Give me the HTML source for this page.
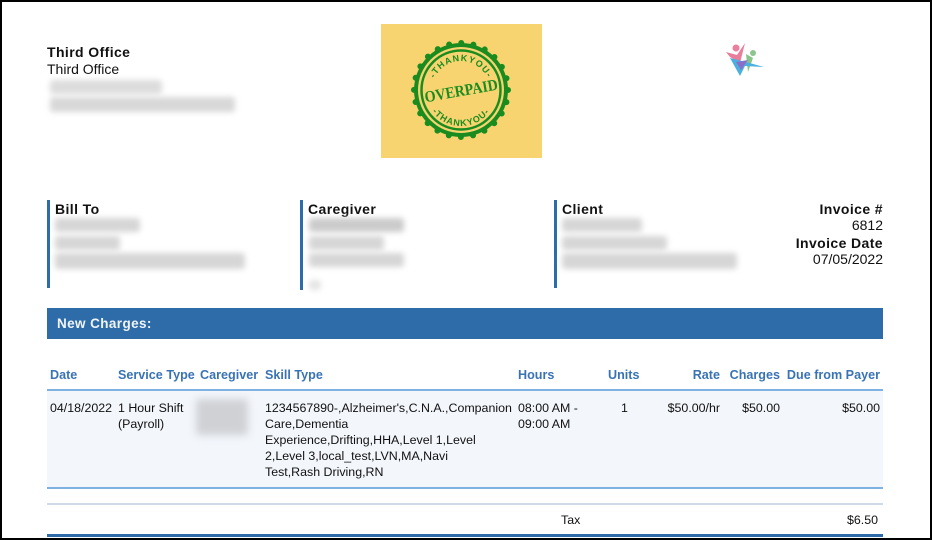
<!DOCTYPE html>
<html><head><meta charset="utf-8"><style>
*{margin:0;padding:0;box-sizing:border-box}
body{width:932px;height:540px;overflow:hidden;background:#fff;font-family:"Liberation Sans",Arial,sans-serif;font-size:12.4px;color:#111;position:relative}
.frame{position:absolute;left:0;top:0;width:932px;height:540px;border:2px solid #000}
.a{position:absolute;white-space:nowrap}
.b{font-weight:bold;letter-spacing:0.4px}
.blur{position:absolute;background:#d6d6d6;filter:blur(3px);border-radius:3px}
.bar{position:absolute;width:3px;background:#2d6ca9}
.h{position:absolute;top:368px;color:#3a73b4;font-weight:bold;font-size:12.6px}
.c{position:absolute;top:400px;line-height:16px;font-size:12.4px}
.t{font-size:14px}
</style></head><body>
<div class="frame"></div>
<div class="a b t" style="left:47px;top:44px">Third Office</div>
<div class="a t" style="left:47px;top:61px">Third Office</div>
<div class="blur" style="left:50px;top:80px;width:112px;height:14px;background:#dcdcdc"></div>
<div class="blur" style="left:50px;top:97px;width:185px;height:15px;background:#d8d8d8"></div>

<div style="position:absolute;left:381px;top:24px;width:161px;height:134px;background:#f7d470"></div>
<svg style="position:absolute;left:381px;top:24px" width="161" height="134" viewBox="0 0 161 134">
<defs>
<path id="top" d="M51 66 A29 29 0 0 1 109 66"/>
<path id="bot" d="M44 66 A36 36 0 0 0 116 66"/>
</defs>
<circle cx="80" cy="66" r="47" fill="#1a8c1f"/>
<circle cx="80" cy="66" r="47" fill="none" stroke="#1a8c1f" stroke-width="6" stroke-linecap="round" stroke-dasharray="0 12.3"/>
<circle cx="80" cy="66" r="43" fill="#f7d470"/>
<circle cx="80" cy="66" r="39.5" fill="none" stroke="#1a8c1f" stroke-width="2.5"/>
<text fill="#1a8c1f" font-size="9" font-weight="bold" font-family="Liberation Sans" letter-spacing="1"><textPath href="#top" startOffset="50%" text-anchor="middle">-THANKYOU-</textPath></text>
<text fill="#1a8c1f" font-size="9" font-weight="bold" font-family="Liberation Sans" letter-spacing="1"><textPath href="#bot" startOffset="50%" text-anchor="middle">-THANKYOU-</textPath></text>
<text x="80" y="72" text-anchor="middle" fill="#1a8c1f" font-size="16" font-weight="bold" font-family="Liberation Serif" textLength="74" lengthAdjust="spacingAndGlyphs" transform="rotate(-10 80 66)">OVERPAID</text>
</svg>

<svg style="position:absolute;left:724px;top:40px" width="42" height="38" viewBox="0 0 42 38">
<circle cx="12" cy="8" r="3.5" fill="#ec7fa0"/>
<path d="M2 12 L13 15 L21 3 L16 23 L6 17Z" fill="#ea7c9c"/>
<circle cx="29" cy="13" r="3" fill="#8cc68e"/>
<path d="M22 14 L29 18 L24 32Z" fill="#86c488"/>
<path d="M6 18 L16 36 L21 26 L40 27 L22 22Z" fill="#4bb0e0"/>
<path d="M12 22 L17 30 L24 20Z" fill="#8a6fc8"/>
</svg>

<div class="bar" style="left:47px;top:200px;height:88px"></div>
<div class="bar" style="left:300px;top:200px;height:90px"></div>
<div class="bar" style="left:554px;top:200px;height:88px"></div>
<div class="a b t" style="left:55px;top:201px">Bill To</div>
<div class="a b t" style="left:308px;top:201px">Caregiver</div>
<div class="a b t" style="left:562px;top:201px">Client</div>
<div class="blur" style="left:55px;top:218px;width:85px;height:14px"></div>
<div class="blur" style="left:55px;top:236px;width:65px;height:14px"></div>
<div class="blur" style="left:55px;top:253px;width:190px;height:16px"></div>
<div class="blur" style="left:309px;top:218px;width:95px;height:14px;background:#cbcbcb"></div>
<div class="blur" style="left:309px;top:236px;width:75px;height:14px"></div>
<div class="blur" style="left:309px;top:253px;width:95px;height:14px"></div>
<div class="blur" style="left:309px;top:280px;width:12px;height:10px;background:#e4e4e4"></div>
<div class="blur" style="left:562px;top:218px;width:80px;height:14px"></div>
<div class="blur" style="left:562px;top:236px;width:105px;height:14px"></div>
<div class="blur" style="left:562px;top:253px;width:175px;height:16px"></div>
<div class="a b t" style="right:49px;top:201px">Invoice #</div>
<div class="a t" style="right:49px;top:217px">6812</div>
<div class="a b t" style="right:49px;top:235px">Invoice Date</div>
<div class="a t" style="right:49px;top:251px">07/05/2022</div>

<div style="position:absolute;left:47px;top:308px;width:836px;height:31px;background:#2d6ca9"></div>
<div class="a b" style="left:57px;top:316px;color:#f0f4fa;font-size:13.5px">New Charges:</div>

<div class="h" style="left:50px">Date</div>
<div class="h" style="left:118px">Service Type</div>
<div class="h" style="left:200px">Caregiver</div>
<div class="h" style="left:265px">Skill Type</div>
<div class="h" style="left:518px">Hours</div>
<div class="h" style="left:608px">Units</div>
<div class="h" style="right:212px">Rate</div>
<div class="h" style="right:152px">Charges</div>
<div class="h" style="right:52px">Due from Payer</div>

<div style="position:absolute;left:47px;top:389px;width:836px;height:2px;background:#7fb1e3"></div>
<div style="position:absolute;left:47px;top:391px;width:836px;height:96px;background:#f3f6fb"></div>
<div style="position:absolute;left:47px;top:487px;width:836px;height:2px;background:#7fb1e3"></div>
<div style="position:absolute;left:47px;top:503px;width:836px;height:2px;background:#d0dae6"></div>
<div style="position:absolute;left:47px;top:534px;width:836px;height:3px;background:#2d6ca9"></div>

<div class="c" style="left:50px">04/18/2022</div>
<div class="c" style="left:118px">1 Hour Shift<br>(Payroll)</div>
<div class="blur" style="left:196px;top:399px;width:52px;height:36px;background:#cfd1d5;filter:blur(4px)"></div>
<div class="c" style="left:265px;width:252px;white-space:normal">1234567890-,Alzheimer's,C.N.A.,Companion<br>Care,Dementia<br>Experience,Drifting,HHA,Level 1,Level<br>2,Level 3,local_test,LVN,MA,Navi<br>Test,Rash Driving,RN</div>
<div class="c" style="left:518px">08:00 AM -<br>09:00 AM</div>
<div class="c" style="left:621px">1</div>
<div class="c" style="right:212px">$50.00/hr</div>
<div class="c" style="right:152px">$50.00</div>
<div class="c" style="right:52px">$50.00</div>
<div class="a" style="left:561px;top:513px">Tax</div>
<div class="a" style="right:54px;top:513px">$6.50</div>
</body></html>
